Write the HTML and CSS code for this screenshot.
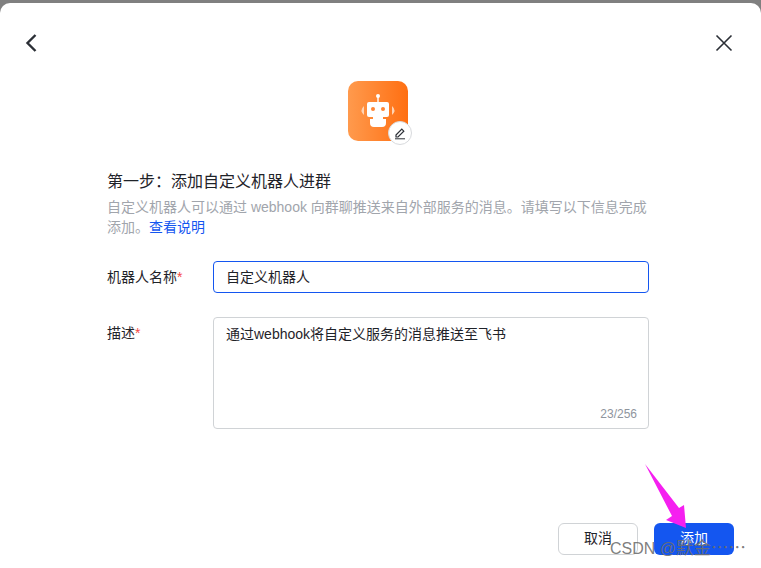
FILE: index.html
```html
<!DOCTYPE html>
<html>

<head>
  <meta charset="UTF-8">
  <meta name="viewport" content="width=device-width, initial-scale=1.0">
  <link rel="stylesheet" href="styles.css">
</head>

<body>
  <div class="backdrop"></div>
  <div class="modal">
    <div class="modal-head">
      <svg class="head-icon" width="24" height="24" viewBox="0 0 24 24">
        <path d="M15.5 4 L7.500 12 L15.5 20" fill="none" stroke="#2b2f36" stroke-width="2.4" />
      </svg>
      <svg class="head-icon" width="24" height="24" viewBox="0 0 24 24">
        <path d="M4.500 4.500 L19.500 19.500 M19.500 4.500 L4.500 19.500" fill="none" stroke="#2b2f36" stroke-width="1.6" />
      </svg>
    </div>

    <div class="avatar">
      <svg width="60" height="60" viewBox="0 0 60 60">
        <defs>
          <linearGradient id="avatar-bg" x1="0" y1="0" x2="1" y2="0">
            <stop offset="0" stop-color="#ff9a4d" />
            <stop offset="1" stop-color="#ff6f12" />
          </linearGradient>
        </defs>
        <rect width="60" height="60" rx="10" fill="url(#avatar-bg)" />
        <circle cx="30" cy="15" r="2" fill="#fff" />
        <rect x="29.3" y="16" width="1.4" height="6" fill="#fff" />
        <rect x="19" y="21" width="22" height="15" rx="2" fill="#fff" />
        <circle cx="25" cy="28" r="2" fill="#ff8534" />
        <circle cx="35" cy="28" r="2" fill="#ff8534" />
        <path d="M25 36 H35 V38 H38 V42 Q38 46 34 46 H26 Q22 46 22 42 V38 H25 Z" fill="#fff" />
        <path d="M16 25 Q11 29.500 16 34 Z M44 25 Q49 29.500 44 34 Z" fill="#ffd3b3" />
      </svg>
      <span class="avatar-edit">
        <svg width="14" height="14" viewBox="0 0 14 14">
          <path d="M3 9 L8.800 3.200 L10.800 5.200 L5 11 H3 Z" fill="none" stroke="#2b2f36" stroke-width="1.200" />
          <path d="M2 12.800 H12" stroke="#2b2f36" stroke-width="1" />
        </svg>
      </span>
    </div>

    <div class="content">
      <h2 class="step-title">第一步：添加自定义机器人进群</h2>
      <p class="step-desc">自定义机器人可以通过 webhook 向群聊推送来自外部服务的消息。请填写以下信息完成添加。<a class="link" href="#">查看说明</a></p>

      <div class="field field-name">
        <label class="field-label">机器人名称<span class="req">*</span></label>
        <div class="input-box">自定义机器人</div>
      </div>

      <div class="field field-desc">
        <label class="field-label">描述<span class="req">*</span></label>
        <div class="textarea-box">
          <span>通过webhook将自定义服务的消息推送至飞书</span>
          <span class="counter">23/256</span>
        </div>
      </div>
    </div>

    <div class="modal-foot">
      <button class="btn btn-cancel">取消</button>
      <button class="btn btn-add">添加</button>
    </div>
  </div>

  <!-- screenshot annotation -->
  <svg class="arrow" width="60" height="70" viewBox="0 0 60 70">
    <path d="M4 3 L38 47 L43 44 L45 67 L25 59 L31 55 Z" fill="#f51ff0" />
  </svg>
  <div class="watermark">CSDN @<span class="watermark-name">默金……</span></div>
</body>

</html>
```

FILE: styles.css
```css
* {
  box-sizing: border-box;
}

html,
body {
  margin: 0;
  height: 100%;
}

body {
  position: relative;
  width: 761px;
  height: 568px;
  overflow: hidden;
  background-color: #808080;
  font-family: "Liberation Sans", "Noto Sans CJK SC", sans-serif;
  color: #1f2329;
}

.backdrop {
  height: 3px;
}

.modal {
  height: 565px;
  background-color: #fff;
  border-radius: 10px 10px 0 0;
  padding: 28px 25px 0 20px;
  display: flex;
  flex-direction: column;
}

.modal-head {
  display: flex;
  justify-content: space-between;
  height: 24px;
}

.avatar {
  position: relative;
  width: 60px;
  height: 60px;
  margin: 26px 0 0 328px;
}

.avatar svg {
  display: block;
}

.avatar-edit {
  position: absolute;
  right: -4px;
  bottom: -4px;
  width: 24px;
  height: 24px;
  border-radius: 50%;
  background-color: #fff;
  border: 1px solid #d8dadd;
  display: flex;
  align-items: center;
  justify-content: center;
}

.content {
  width: 542px;
  margin-left: 87px;
}

.step-title {
  margin: 30px 0 0;
  font-size: 16px;
  font-weight: normal;
  line-height: 22px;
}

.step-desc {
  margin: 4px 0 0;
  font-size: 14px;
  line-height: 20px;
  color: #a1a5ac;
}

.link {
  color: #1456f0;
  text-decoration: none;
}

.field {
  display: flex;
}

.field-name {
  margin-top: 24px;
}

.field-desc {
  margin-top: 24px;
}

.field-label {
  width: 106px;
  flex-shrink: 0;
  font-size: 14px;
  line-height: 32px;
}

.req {
  color: #f54a45;
}

.input-box {
  width: 436px;
  height: 32px;
  border: 1px solid #1456f0;
  border-radius: 4px;
  padding: 0 12px;
  font-size: 14px;
  line-height: 30px;
}

.textarea-box {
  position: relative;
  width: 436px;
  height: 112px;
  border: 1px solid #d0d3d6;
  border-radius: 4px;
  padding: 6px 12px;
  font-size: 14px;
  line-height: 20px;
}

.counter {
  position: absolute;
  right: 11px;
  bottom: 5px;
  font-size: 12px;
  line-height: 18px;
  color: #8f959e;
}

.modal-foot {
  display: flex;
  justify-content: flex-end;
  gap: 16px;
  margin-top: 94px;
  padding-right: 2px;
}

.btn {
  width: 80px;
  height: 32px;
  border-radius: 6px;
  font-family: inherit;
  font-size: 14px;
  padding: 0 0 4px;
}

.btn-cancel {
  background-color: #fff;
  border: 1px solid #d0d3d6;
  color: #1f2329;
}

.btn-add {
  background-color: #1456f0;
  border: none;
  color: #fff;
}

.arrow {
  position: absolute;
  left: 641px;
  top: 461px;
}

.watermark {
  position: absolute;
  left: 610px;
  top: 537px;
  font-size: 16px;
  line-height: 20px;
  white-space: nowrap;
  color: rgba(110, 110, 110, 0.9);
}

.watermark-name {
  font-family: "Noto Sans CJK SC", sans-serif;
  font-size: 17.5px;
}
```
